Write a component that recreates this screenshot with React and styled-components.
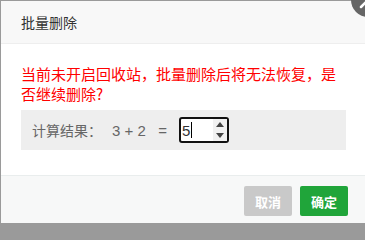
import React from 'react';
import styled, { createGlobalStyle } from 'styled-components';

const GlobalStyle = createGlobalStyle`
  html, body {
    margin: 0;
    padding: 0;
    overflow: hidden;
    background: #9a9a9a;
  }
  body {
    font-family: "Noto Sans CJK SC", "Liberation Sans", sans-serif;
  }
`;

const Viewport = styled.div`
  position: relative;
  width: 365px;
  height: 223px;
  overflow: hidden;
  padding: 1px 0 0 1px;
  box-sizing: border-box;
`;

const Dialog = styled.div`
  width: 364px;
  background: #fff;
`;

const Header = styled.div`
  height: 42px;
  line-height: 42px;
  padding: 0 80px 0 20px;
  font-size: 14px;
  color: #333;
  background: #f8f8f8;
  border-bottom: 1px solid #eee;
`;

const CloseButton = styled.div`
  position: absolute;
  left: 351px;
  top: -17px;
  width: 34px;
  height: 34px;
  border-radius: 50%;
  background: #666;
  display: flex;
  align-items: center;
  justify-content: center;
`;

const Body = styled.div`
  padding: 20px 20px 25px;
`;

const Warning = styled.p`
  margin: 0;
  font-size: 15px;
  line-height: 20px;
  color: #ff0000;
`;

const CaptchaBox = styled.div`
  display: flex;
  align-items: center;
  width: 325px;
  height: 40px;
  margin-top: 6px;
  padding-left: 11px;
  box-sizing: border-box;
  background: #eee;
  font-size: 14px;
  color: #666;
`;

const Formula = styled.span`
  margin-left: 10px;
  font-family: "Liberation Sans", "Noto Sans CJK SC", sans-serif;
  font-size: 15px;
  white-space: pre;
`;

const NumberInput = styled.div`
  display: flex;
  align-items: stretch;
  width: 50px;
  height: 26px;
  margin-left: 12px;
  box-sizing: border-box;
  border: 2px solid #111;
  border-radius: 3px;
  background: #fff;
`;

const Value = styled.div`
  flex: 1;
  display: flex;
  align-items: center;
  padding-left: 1px;
  font-family: "Liberation Sans", sans-serif;
  font-size: 15px;
  color: #333;
`;

const Caret = styled.span`
  width: 1px;
  height: 16px;
  margin-left: 1px;
  background: #000;
`;

const Spinner = styled.div`
  width: 14px;
  display: flex;
  flex-direction: column;
  align-items: center;
  justify-content: space-around;
  background: #f1f1f1;
`;

const Footer = styled.div`
  display: flex;
  justify-content: flex-end;
  gap: 8px;
  padding: 10px 17px 12px;
  background: #f7f8f8;
  border-top: 1px solid #e9eded;
`;

const Button = styled.button`
  width: 48px;
  height: 30px;
  padding: 0;
  border: none;
  border-radius: 2px;
  font-family: "Noto Sans CJK SC", sans-serif;
  font-size: 13px;
  font-weight: 700;
  color: #fff;
  background: ${(p) => (p.$primary ? '#20a53a' : '#c9c9c9')};
  cursor: pointer;
`;

const Arrow = ({ down }) => (
  <svg width="8" height="5" viewBox="0 0 8 5">
    <path d={down ? 'M0 0 L8 0 L4 5 Z' : 'M0 5 L8 5 L4 0 Z'} fill="#444" />
  </svg>
);

export default function App() {
  return (
    <>
      <GlobalStyle />
      <Viewport>
        <Dialog>
          <Header>批量删除</Header>
          <Body>
            <Warning>当前未开启回收站，批量删除后将无法恢复，是否继续删除?</Warning>
            <CaptchaBox>
              计算结果：
              <Formula>{'3 + 2   ='}</Formula>
              <NumberInput>
                <Value>
                  5<Caret />
                </Value>
                <Spinner>
                  <Arrow />
                  <Arrow down />
                </Spinner>
              </NumberInput>
            </CaptchaBox>
          </Body>
          <Footer>
            <Button>取消</Button>
            <Button $primary>确定</Button>
          </Footer>
        </Dialog>
        <CloseButton>
          <svg width="34" height="34" viewBox="0 0 34 34">
            <path d="M10 10 L24 24 M24 10 L10 24" stroke="#fff" strokeWidth="2.5" strokeLinecap="round" />
          </svg>
        </CloseButton>
      </Viewport>
    </>
  );
}
